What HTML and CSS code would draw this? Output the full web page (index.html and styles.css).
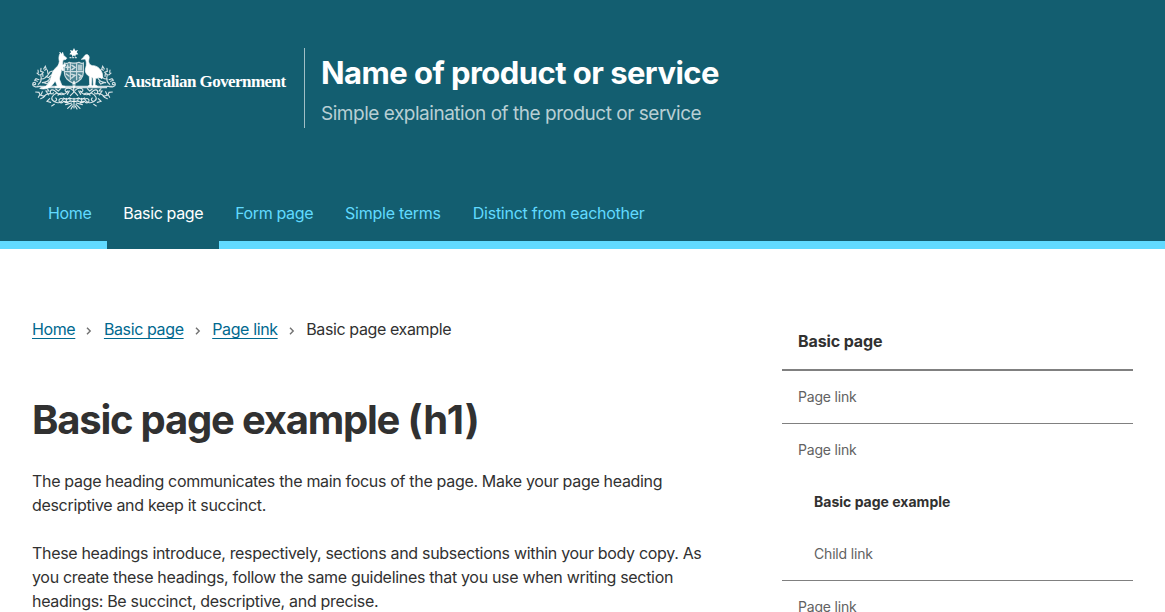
FILE: index.html
```html
<!DOCTYPE html>
<html lang="en">
<head>
<meta charset="utf-8">
<title>Basic page example</title>
<link rel="stylesheet" href="styles.css">
</head>
<body>
<header class="header">
  <div class="brand">
    <svg class="crest" viewBox="24 24 252 186" fill="none" stroke="#fff" stroke-linecap="round" role="img" aria-label="Coat of arms">
      <g fill="#fff" stroke="none">
        <path d="M150 24l4 8 8-2-4 7 5 6-8 1-1 7-4-5-5 5-1-7-8-1 5-6-3-7 8 2z"/>
        <path stroke="#fff" stroke-width="2" d="M108 37l5 6 3-6 3 10c4 2 8 5 9 8l-2 3-9 2c-1 6-2 10-1 15l8-2 1 4-8 5 3 9-5 1-3-6c0 9-1 16-4 22l-2 9 8 20 9 2v4H94l-1-3 7-2-6-15c-7 8-9 17-25 22-8 3-16 2-22 0 14-2 22-7 28-17 3-6 4-9 6-16 3-13 6-22 15-29 6-4 9-10 10-19-2-8-2-16 2-23z"/>
        <path stroke="#fff" stroke-width="2" d="M180 50c3-6 10-9 14-3 4 6-1 12 0 18 1 7 5 11 12 12 12 0 22 7 28 21 3 7 2 13 0 18l-9-5c-3 3-7 4-10 4l-2 20 7 3v3h-16l4-6-1-21-4-3-1 24 4 4h-14l5-5-1-25c-7-4-11-9-12-16-1-9 4-14 3-22 0-6-1-11-4-14l-10 1z"/>
      </g>
      <g stroke-width="3.5" opacity=".8">
        <path d="M138 53h24" stroke-dasharray="3 5"/>
        <path d="M121 69q8 3 14-2 8 3 15 2 8 1 15-2 7 5 13 2v28c0 17-10 25-28 34-18-9-29-17-29-34z" fill="#fff" fill-opacity=".3"/>
        <path d="M122 95h56M139 70v49M158 70v49"/>
        <path d="M131 75v14M126 82h10M144 76l9 6-9 7M165 76v14M171 76v14M127 102l8 6M143 103l10 3-10 8M164 103l8 5-6 6" stroke-width="4.5"/>
      </g>
      <g stroke-width="3.5" opacity=".8">
        <path d="M49 139c-9 4-23 2-23-6 0-7 9-8 9-2 0 3-3 4-5 2M251 139c9 4 23 2 23-6 0-7-9-8-9-2 0 3 3 4 5 2"/>
        <path d="M39 139h225M51 143h197"/>
      </g>
      <g stroke-width="3.4" opacity=".82">
        <path id="leafTop" d="M43 133c10-7 10-18 7-29M50 117c11 1 19-6 26-18M55 128c9-1 20-6 23-14M46 105l-7-6M51 104l7-7-8-3 1-9M45 119l-9-3-4 5 8 3M57 109l-1-8M66 109l7 4 9-8M72 102l-2-12M76 97l9-4M60 128l10 4 5-7M59 87l5-8 3 9-5 3M43 97l-1-7"/>
        <use href="#leafTop" transform="translate(300 0) scale(-1 1)"/>
        <path id="scroll" d="M150 143c-5-8-3-13 0-19M147 151c-9-9-19-8-23-3-3 6 4 9 8 5M132 153c-10 14-27 15-37 2-7-9-17-6-16 2 1 7 9 5 9 1M98 159c-14 6-20 19-9 24 8 3 12-6 6-9M89 184c10 7 23 5 29-6M118 178c-7-5-14-2-13 5 1 7 10 8 14 1M102 166c4-8 15-9 18-2M80 161c-12-1-17 3-21 11M74 165l-8-12 9 0M62 169l-14-4-3-8-10-1M51 164l4-9M47 165l-4 7M59 172l-9 4M77 176l-8 8 11 3M74 151l-5-5M110 146l-7 7-8-6M91 193l-8 5"/>
        <use href="#scroll" transform="translate(300 0) scale(-1 1)"/>
      </g>
      <g stroke-width="3.5">
        <path opacity=".9" d="M118 174q10 7 18 0 14 6 28 0 9 7 18 0M120 184q12 4 20-1 10 3 20 0 10 5 20 1M127 175v8M138 174v7M150 175v7M162 174v7M173 175v7"/>
        <path opacity=".85" d="M149 145v12l-10 10M150 154l11 12M136 153l-6 10M164 153l6 10M150 184v20M143 189l-18 5M157 189l18 5M144 193l-13 12M156 193l12 12M146 198l-5 9M154 198l5 9M132 188l-9-1M169 188l9-1"/>
      </g>
    </svg>
    <span class="government">Australian Government</span>
    <div class="product">
      <div class="product-name">Name of product or service</div>
      <div class="product-text">Simple explaination of the product or service</div>
    </div>
  </div>
  <nav class="main-nav">
    <a class="nav-item">Home</a>
    <a class="nav-item nav-active">Basic page</a>
    <a class="nav-item">Form page</a>
    <a class="nav-item nav-wide">Simple terms</a>
    <a class="nav-item nav-wide">Distinct from eachother</a>
  </nav>
</header>
<div class="body">
  <main class="content">
    <nav class="breadcrumbs">
      <a class="link">Home</a>
      <svg class="chevron" viewBox="0 0 6 8"><path d="M1 .8L4.2 4 1 7.2"/></svg>
      <a class="link">Basic page</a>
      <svg class="chevron" viewBox="0 0 6 8"><path d="M1 .8L4.2 4 1 7.2"/></svg>
      <a class="link">Page link</a>
      <svg class="chevron" viewBox="0 0 6 8"><path d="M1 .8L4.2 4 1 7.2"/></svg>
      <span>Basic page example</span>
    </nav>
    <h1 class="title">Basic page example <span class="level">(h1)</span></h1>
    <p class="para">The page heading communicates the main focus of the page. Make your page heading descriptive and keep it succinct.</p>
    <p class="para">These headings introduce, respectively, sections and subsections within your body copy. As you create these headings, follow the same guidelines that you use when writing section headings: Be succinct, descriptive, and precise.</p>
  </main>
  <aside class="side-nav">
    <div class="side-title">Basic page</div>
    <a class="side-link">Page link</a>
    <div class="side-group">
      <a class="side-link">Page link</a>
      <a class="side-link side-child side-current">Basic page example</a>
      <a class="side-link side-child">Child link</a>
    </div>
    <a class="side-link">Page link</a>
  </aside>
</div>
</body>
</html>
```

FILE: styles.css
```css
* { box-sizing: border-box; }
body {
  margin: 0;
  height: 612px;
  overflow: hidden;
  background: #fff;
  color: #313131;
  font: 16px/24px Inter, sans-serif;
  letter-spacing: -0.32px;
}
.header { background: #135e70; height: 249px; display: flex; flex-direction: column; justify-content: space-between; }
.brand { display: flex; padding: 48px 32px 0; height: 128px; }
.crest { width: 84px; height: 62px; flex: none; }
.government {
  width: 162px;
  margin: 22px 18px 0 8px;
  color: #fff;
  font: bold 17px/24px "Liberation Serif", serif;
  letter-spacing: -0.56px;
  white-space: nowrap;
}
.product { border-left: 1px solid #a1bfc6; padding-left: 16px; white-space: nowrap; }
.product-name { color: #fff; font-size: 31px; font-weight: 700; line-height: 50px; letter-spacing: -0.55px; }
.product-text { color: #b8cfd4; font-size: 19px; line-height: 30px; margin-top: 1px; letter-spacing: -0.48px; }
.main-nav { display: flex; padding-left: 32px; height: 64px; border-bottom: 8px solid #61daff; }
.nav-item { padding: 16px 16px 0; height: 64px; color: #61daff; white-space: nowrap; letter-spacing: -0.37px; }
.nav-active { color: #fff; background: #135e70; }
.nav-wide { letter-spacing: -0.26px; }
.body { display: flex; justify-content: space-between; padding: 64px 32px 0; }
.content { width: 690px; }
.breadcrumbs { display: flex; align-items: center; padding-top: 4px; letter-spacing: -0.38px; }
.link { color: #00698f; text-decoration: underline; text-underline-offset: 3px; text-decoration-thickness: 1px; text-decoration-skip-ink: none; }
.chevron { width: 6px; height: 8px; margin: 3px 11.6px 0 11px; fill: none; stroke: #717171; stroke-width: 1.4; }
.title { font-size: 40px; line-height: 50px; font-weight: 700; letter-spacing: -1.22px; margin: 54px 0 0; white-space: nowrap; }
.level { letter-spacing: 0.1px; }
.para { margin: 24px 0 0; }
.side-nav { width: 351px; }
.side-title { padding: 16px; font-weight: 700; letter-spacing: -0.12px; border-bottom: 2px solid #808080; }
.side-link { display: block; padding: 16px; font-size: 14px; line-height: 20px; color: #626262; letter-spacing: -0.18px; }
.side-nav > .side-link, .side-group { border-bottom: 1px solid #808080; }
.side-child { padding-left: 32px; }
.side-current { color: #313131; font-weight: 700; letter-spacing: 0.01px; }
```
